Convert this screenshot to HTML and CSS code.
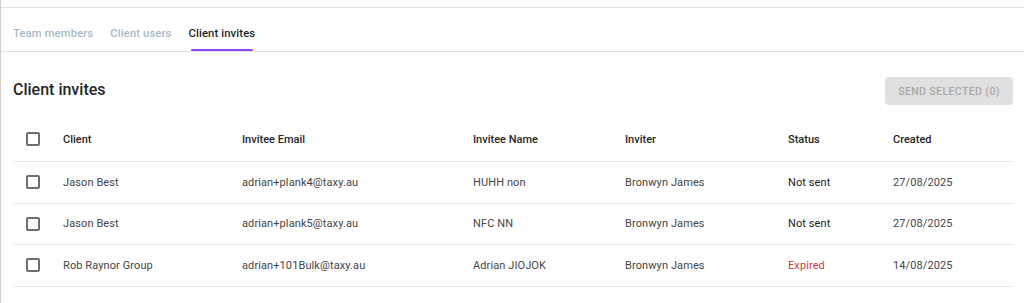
FILE: index.html
```html
<!DOCTYPE html>
<html lang="en">
<head>
  <meta charset="UTF-8" />
  <meta name="viewport" content="width=device-width, initial-scale=1.0"/>
  <title>Client invites</title>
  <link rel="stylesheet" href="styles.css">
</head>
<body>
  <div class="page">
    <nav class="tabs">
      <a class="tab">Team members</a>
      <a class="tab">Client users</a>
      <a class="tab active">Client invites</a>
    </nav>

    <section class="content">
      <div class="title-row">
        <h2>Client invites</h2>
        <button class="send-btn" disabled>Send selected (0)</button>
      </div>

      <table>
        <colgroup>
          <col class="c-check">
          <col class="c-client">
          <col class="c-email">
          <col class="c-name">
          <col class="c-inviter">
          <col class="c-status">
          <col class="c-created">
        </colgroup>
        <thead>
          <tr>
            <th><span class="box"></span></th>
            <th>Client</th>
            <th>Invitee Email</th>
            <th>Invitee Name</th>
            <th>Inviter</th>
            <th>Status</th>
            <th>Created</th>
          </tr>
        </thead>
        <tbody>
          <tr>
            <td><span class="box"></span></td>
            <td>Jason Best</td>
            <td>adrian+plank4@taxy.au</td>
            <td>HUHH non</td>
            <td>Bronwyn James</td>
            <td class="status">Not sent</td>
            <td>27/08/2025</td>
          </tr>
          <tr>
            <td><span class="box"></span></td>
            <td>Jason Best</td>
            <td>adrian+plank5@taxy.au</td>
            <td>NFC NN</td>
            <td>Bronwyn James</td>
            <td class="status">Not sent</td>
            <td>27/08/2025</td>
          </tr>
          <tr>
            <td><span class="box"></span></td>
            <td>Rob Raynor Group</td>
            <td>adrian+101Bulk@taxy.au</td>
            <td>Adrian JIOJOK</td>
            <td>Bronwyn James</td>
            <td class="status expired">Expired</td>
            <td>14/08/2025</td>
          </tr>
        </tbody>
      </table>
    </section>
  </div>
</body>
</html>
```

FILE: styles.css
```css
html, body {
  margin: 0;
  height: 100%;
  background: #fff;
  font-family: Roboto, "Noto Sans", Arial, sans-serif;
  color: #3d3d3d;
}
.page {
  min-height: 100%;
  border-left: 1px solid #cfcfcf;
  padding-top: 7px;
  box-sizing: border-box;
}
.tabs {
  display: flex;
  border-top: 1px solid #e2e2e2;
  border-bottom: 1px solid #e2e2e2;
  height: 43px;
}
.tab {
  position: relative;
  display: flex;
  align-items: center;
  padding: 7px 12px 0;
  margin-right: -7px;
  font-size: 11.3px;
  font-weight: 500;
  letter-spacing: 0.1px;
  color: #a9b9c9;
}
.tab.active {
  color: #1f1f1f;
}
.tab.active::after {
  content: "";
  position: absolute;
  left: 14px;
  right: 14px;
  bottom: 0;
  height: 2px;
  background: #8a47f5;
  border-radius: 1px;
}
.content {
  padding: 0 11px 0 12px;
}
.title-row {
  display: flex;
  justify-content: space-between;
  align-items: center;
  margin-top: 25px;
}
h2 {
  margin: 0;
  font-size: 16px;
  font-weight: 500;
  color: #262626;
  padding-bottom: 3px;
}
.send-btn {
  width: 128px;
  height: 28px;
  border: none;
  border-radius: 4px;
  background: #e0e0e0;
  color: #a8a8a8;
  font-family: inherit;
  font-size: 10.5px;
  font-weight: 500;
  letter-spacing: 0.4px;
  text-transform: uppercase;
}
table {
  width: 999px;
  margin-top: 12px;
  border-collapse: collapse;
  table-layout: fixed;
}
.c-check { width: 38px; }
.c-client { width: 179px; }
.c-email { width: 231px; }
.c-name { width: 152px; }
.c-inviter { width: 163px; }
.c-status { width: 105px; }
.c-created { width: 131px; }
th, td {
  text-align: left;
  padding: 0 12px;
  font-size: 11px;
  border-bottom: 1px solid #e8e8e8;
  white-space: nowrap;
}
th {
  height: 44px;
  font-weight: 500;
  color: #262626;
}
td {
  height: 40.5px;
  color: #454545;
  letter-spacing: 0.1px;
}
th:first-child, td:first-child {
  padding: 0 0 0 13px;
}
.box {
  display: block;
  width: 10px;
  height: 10px;
  border: 2px solid #6e6e6e;
  border-radius: 2px;
}
.status {
  color: #222;
}
.status.expired {
  color: #d23b3b;
}
```
